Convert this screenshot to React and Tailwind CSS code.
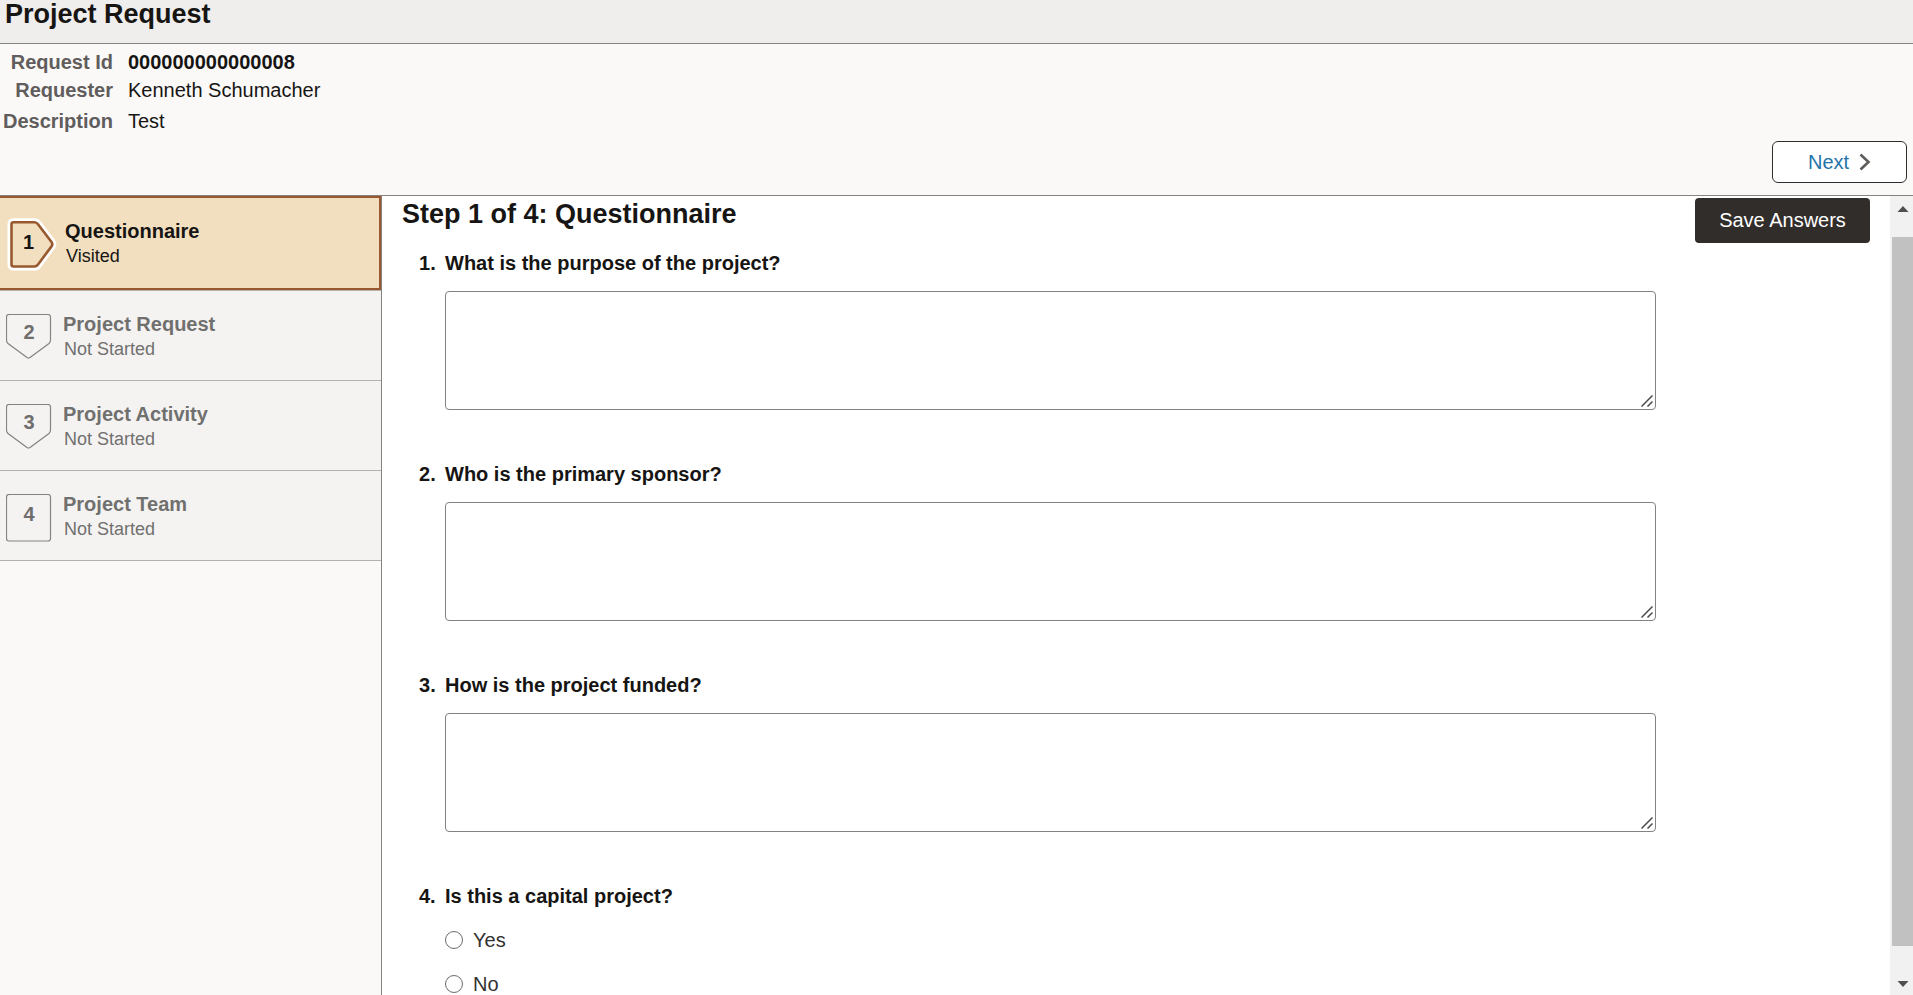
import { useState } from 'react';

const steps = [
  { id: 1, label: 'Questionnaire', status: 'Visited' },
  { id: 2, label: 'Project Request', status: 'Not Started' },
  { id: 3, label: 'Project Activity', status: 'Not Started' },
  { id: 4, label: 'Project Team', status: 'Not Started' },
];

const textQuestions = [
  { id: 1, text: 'What is the purpose of the project?' },
  { id: 2, text: 'Who is the primary sponsor?' },
  { id: 3, text: 'How is the project funded?' },
];

const activeShape =
  'M6.500 4.300H27.500Q29.500 4.300 31 6.300L44.500 24Q46 26.200 44.500 28.400L31 46.500Q29.500 48.500 27.500 48.500H6.500Q4.500 48.500 4.500 46.500V6.300Q4.500 4.300 6.500 4.300Z';

function StepBadge({ id, active, last }) {
  if (active) {
    return (
      <svg width="50" height="54" viewBox="0 0 50 54" aria-hidden="true">
        <path d={activeShape} fill="#f2dfbf" stroke="#ffffff" strokeWidth="8" strokeLinejoin="round" />
        <path d={activeShape} fill="#f2dfbf" stroke="#99592f" strokeWidth="2.600" />
        <text x="21.5" y="31" textAnchor="middle" fontSize="20" fontWeight="700" fill="#161513">
          {id}
        </text>
      </svg>
    );
  }

  const shape = last
    ? 'M3 0.500H42Q44.500 0.500 44.500 3V44.500Q44.500 47 42 47H3Q0.500 47 0.500 44.500V3Q0.500 0.500 3 0.500Z'
    : 'M3 0.500H42Q44.500 0.500 44.500 3V26Q44.500 28 43 29.500L24 43.500Q22.500 44.500 21 43.500L2 29.500Q0.500 28 0.500 26V3Q0.500 0.500 3 0.500Z';

  return (
    <svg width="46" height="48" viewBox="0 0 46 48" aria-hidden="true">
      <path d={shape} fill="none" stroke="#85827f" strokeWidth="1.200" />
      <text x="23" y={last ? 27 : 25} textAnchor="middle" fontSize="20" fontWeight="700" fill="#6f6e6d">
        {id}
      </text>
    </svg>
  );
}

function StepItem({ step, active, last, onSelect }) {
  return (
    <li className="border-b border-[#b3b1ae]">
      <button
        type="button"
        onClick={onSelect}
        aria-current={active ? 'step' : undefined}
        className={`flex w-full items-start text-left ${
          active
            ? 'h-[94px] gap-2 border-2 border-l-0 border-[#99592f] bg-[#f2dfbf] pt-5 pl-[7px] text-[#161513]'
            : 'h-[89px] gap-[11px] bg-[#f5f3f2] pt-5 pl-[6px] text-[#70706e]'
        }`}
      >
        <span className={active ? 'shrink-0' : 'shrink-0 pt-[3px]'}>
          <StepBadge id={step.id} active={active} last={last} />
        </span>
        <span className="flex flex-col">
          <span className="text-[20px] leading-[26px] font-bold">{step.label}</span>
          <span className="pl-px text-[18px] leading-6">{step.status}</span>
        </span>
      </button>
    </li>
  );
}

function TextQuestion({ question }) {
  const fieldId = `question-${question.id}`;
  return (
    <li className="mb-[50px]">
      <label htmlFor={fieldId} className="flex text-[20px] leading-7 font-bold">
        <span className="w-[26px] shrink-0">{question.id}.</span>
        {question.text}
      </label>
      <div className="relative mt-[14px] ml-[26px]">
        <textarea
          id={fieldId}
          className="block h-[119px] w-full resize-none rounded-[4px] border border-[#85827f] bg-white p-2 text-[20px] outline-none"
        />
        <svg
          className="pointer-events-none absolute right-[3px] bottom-[3px]"
          width="12"
          height="12"
          viewBox="0 0 12 12"
          aria-hidden="true"
        >
          <path d="M0.500 11.500L11.500 0.500M6.500 11.500L11.500 6.500" stroke="#4a4a4a" strokeWidth="1.500" />
        </svg>
      </div>
    </li>
  );
}

function ScrollTrack() {
  return (
    <div className="flex w-[23px] shrink-0 flex-col bg-[#f1f1f1] pl-[2px]" aria-hidden="true">
      <div className="flex h-[41px] justify-center pt-[9px]">
        <svg width="12" height="8" viewBox="0 0 12 8">
          <path d="M0.500 7L6 1L11.500 7Z" fill="#505050" />
        </svg>
      </div>
      <div className="flex-1 bg-[#c1c1c1]" />
      <div className="flex h-[49px] items-end justify-center pb-[7px]">
        <svg width="12" height="8" viewBox="0 0 12 8">
          <path d="M0.500 1L6 7L11.500 1Z" fill="#505050" />
        </svg>
      </div>
    </div>
  );
}

function App() {
  const [current, setCurrent] = useState(1);
  const [capital, setCapital] = useState('');

  return (
    <div className="flex h-screen flex-col overflow-hidden bg-[#fbf9f8] font-['Liberation_Sans',Arial,sans-serif] text-[20px] text-[#161513]">
      <header className="h-11 shrink-0 border-b border-[#85827f] bg-[#f0eeed] pl-[5px]">
        <h1 className="text-[27px] leading-7 font-bold">Project Request</h1>
      </header>

      <section className="flex shrink-0 items-end justify-between border-b border-[#85827f] pt-1 pr-[6px] pb-3">
        <dl className="grid grid-cols-[113px_auto] gap-x-[15px] self-start leading-7">
          <dt className="text-right font-bold text-[#605d5c]">Request Id</dt>
          <dd className="font-bold">000000000000008</dd>
          <dt className="text-right font-bold text-[#605d5c]">Requester</dt>
          <dd>Kenneth Schumacher</dd>
          <dt className="pt-[3px] text-right font-bold text-[#605d5c]">Description</dt>
          <dd className="pt-[3px]">Test</dd>
        </dl>
        <button
          type="button"
          onClick={() => setCurrent(Math.min(current + 1, steps.length))}
          className="mt-[93px] flex h-[42px] w-[135px] items-center justify-center gap-[10px] rounded-[6px] border border-[#312d2a] bg-white text-[#2574a9]"
        >
          Next
          <svg width="12" height="18" viewBox="0 0 12 18" aria-hidden="true">
            <path d="M1.500 1.500L9.500 9L1.500 16.500" fill="none" stroke="#5f5c5a" strokeWidth="2.600" />
          </svg>
        </button>
      </section>

      <div className="flex min-h-0 flex-1">
        <nav className="w-[382px] shrink-0 border-r border-[#85827f]">
          <ol>
            {steps.map((step, index) => (
              <StepItem
                key={step.id}
                step={step}
                active={step.id === current}
                last={index === steps.length - 1}
                onSelect={() => setCurrent(step.id)}
              />
            ))}
          </ol>
        </nav>

        <main className="flex min-w-0 flex-1 items-start overflow-hidden bg-white pl-5">
          <div className="min-w-0 flex-1">
            <h2 className="pt-1 text-[27px] leading-7 font-bold">
              Step {current} of {steps.length}: {steps[current - 1].label}
            </h2>
            <ol className="mt-[21px] pl-[17px]">
              {textQuestions.map((question) => (
                <TextQuestion key={question.id} question={question} />
              ))}
              <li>
                <fieldset>
                  <legend className="flex leading-7 font-bold">
                    <span className="w-[26px] shrink-0">4.</span>
                    Is this a capital project?
                  </legend>
                  <div className="mt-2 ml-[26px]">
                    {['Yes', 'No'].map((option) => (
                      <label key={option} className="flex h-11 items-center gap-[10px] text-[#333130]">
                        <input
                          type="radio"
                          name="capital"
                          value={option}
                          checked={capital === option}
                          onChange={() => setCapital(option)}
                          className="size-[18px] appearance-none rounded-full border border-[#6b6b6b] bg-white checked:border-[5px]"
                        />
                        {option}
                      </label>
                    ))}
                  </div>
                </fieldset>
              </li>
            </ol>
          </div>
          <div className="shrink-0 pt-[2px] pr-5 pl-[39px]">
            <button
              type="button"
              className="h-[45px] w-[175px] rounded-[4px] bg-[#312d2a] pb-px text-white"
            >
              Save Answers
            </button>
          </div>
        </main>

        <ScrollTrack />
      </div>
    </div>
  );
}

export default App;
